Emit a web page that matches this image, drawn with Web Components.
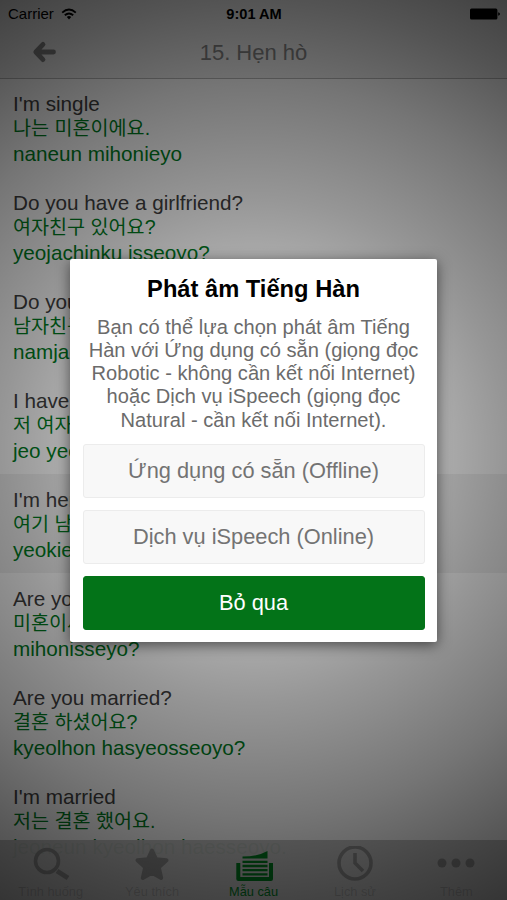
<!DOCTYPE html>
<html lang="vi">
<head>
<meta charset="utf-8">
<title>Hẹn hò</title>
<style>
  body {
    margin: 0;
    font-family: "Liberation Sans", "Noto Sans CJK KR", sans-serif;
  }
</style>
</head>
<body>
<phrase-app></phrase-app>

<script>
class StatusBar extends HTMLElement {
    constructor() {
        super();
        this.attachShadow({ mode: 'open' });
    }

    connectedCallback() {
        this.shadowRoot.innerHTML = `
      <style>
        :host {
          display: flex;
          align-items: center;
          height: 26px;
          padding: 1px 7px 0 8px;
          box-sizing: border-box;
          color: #000;
        }
        .side { flex: 1; display: flex; align-items: center; gap: 7px; font-size: 15px; }
        .right { justify-content: flex-end; }
        .time { font-size: 14.6px; font-weight: bold; }
        svg { display: block; }
      </style>
      <div class="side">
        <span>Carrier</span>
        <svg width="16" height="12" viewBox="0 0 16 12" fill="none" stroke="#000" stroke-width="1.9">
          <path d="M1.2 4.6Q8 -1.4 14.8 4.6"/>
          <path d="M3.8 7.2Q8 3.6 12.2 7.2"/>
          <path d="M8 11.4L5.8 8.9Q8 7.2 10.2 8.9Z" fill="#000" stroke="none"/>
        </svg>
      </div>
      <span class="time">9:01 AM</span>
      <div class="side right">
        <svg width="30" height="12" viewBox="0 0 30 12">
          <rect x="0" y="0.5" width="27.4" height="11" rx="1.5"/>
          <path d="M28.2 4.3Q30 4.8 30 6T28.2 7.7Z"/>
        </svg>
      </div>
    `;
    }
}

class NavBar extends HTMLElement {
    constructor() {
        super();
        this.attachShadow({ mode: 'open' });
    }

    connectedCallback() {
        this.shadowRoot.innerHTML = `
      <style>
        :host {
          display: grid;
          grid-template-columns: 90px 1fr 90px;
          align-items: center;
          height: 53px;
          box-sizing: border-box;
          padding-top: 1px;
          border-bottom: 1px solid #b8b8b8;
          color: #858585;
          font-size: 22px;
          text-align: center;
        }
        svg { display: block; margin: 0 0 2px 32px; }
      </style>
      <svg width="24" height="22" viewBox="0 0 24 22" fill="none" stroke="#858585" stroke-width="4.8" stroke-linecap="round" stroke-linejoin="round">
        <path d="M11 3.4L3.8 11L11 18.6M5 11H21.5"/>
      </svg>
      <slot></slot>
    `;
    }
}

class PhraseRow extends HTMLElement {
    constructor() {
        super();
        this.attachShadow({ mode: 'open' });
    }

    connectedCallback() {
        this.shadowRoot.innerHTML = `
      <style>
        :host {
          display: block;
          height: 99px;
          padding: 13px 13px 0;
          box-sizing: border-box;
          white-space: nowrap;
          font-size: 20.7px;
          color: #404040;
        }
        :host([active]) { background: #f1f1f1; }
        div { height: 26px; line-height: 26px; }
        .ko { height: 24px; line-height: 23px; font-size: 19.6px; }
        .ko, .latin { color: #007d1f; }
      </style>
      <div><slot name="en"></slot></div>
      <div class="ko"><slot name="ko"></slot></div>
      <div class="latin"><slot name="latin"></slot></div>
    `;
    }
}

const TAB_ICONS = {
    search: '<circle cx="16" cy="15" r="11.5" fill="none" stroke-width="3.6"/><path d="M26 25L37 32" fill="none" stroke-width="5"/>',
    star: '<path d="M20 4.5L24 13.2L34.5 14.2L26.8 21.4L29.2 32L20 26.8L10.8 32L13.2 21.4L5.5 14.2L16 13.2Z" stroke-width="4" stroke-linejoin="round"/>',
    phrases: '<path d="M4.3 17V33H37V17" fill="none" stroke-width="4" stroke-linejoin="round"/><path d="M8.5 12.4V10.6Q24 10.5 33.5 5V12.4Z" stroke="none"/><path d="M8.5 15.8H33.5M8.5 20H33.5M8.5 24.2H33.5M8.5 28.3H33.5" fill="none" stroke-width="2.3"/>',
    clock: '<circle cx="20" cy="17" r="16" fill="none" stroke-width="3.6"/><path d="M20 7V17L28 25" fill="none" stroke-width="3.6"/>',
    more: '<circle cx="6" cy="17" r="4.5" stroke="none"/><circle cx="20" cy="17" r="4.5" stroke="none"/><circle cx="34" cy="17" r="4.5" stroke="none"/>',
};

class TabItem extends HTMLElement {
    constructor() {
        super();
        this.attachShadow({ mode: 'open' });
    }

    connectedCallback() {
        this.shadowRoot.innerHTML = `
      <style>
        :host {
          display: flex;
          flex-direction: column;
          align-items: center;
          flex: 1;
          padding-top: 6px;
          font-size: 12.8px;
          line-height: 15px;
          color: rgba(0, 0, 0, .17);
          --icon: #8f8f8f;
        }
        :host([selected]) { color: #007d1f; --icon: #007d1f; }
        svg { display: block; fill: var(--icon); stroke: var(--icon); }
      </style>
      <svg width="40" height="38" viewBox="0 0 40 38">${TAB_ICONS[this.getAttribute('icon')]}</svg>
      <slot></slot>
    `;
    }
}

class TabBar extends HTMLElement {
    constructor() {
        super();
        this.attachShadow({ mode: 'open' });
    }

    connectedCallback() {
        this.shadowRoot.innerHTML = `
      <style>
        :host {
          position: absolute;
          left: 0;
          right: 0;
          bottom: 0;
          display: flex;
          height: 60px;
          background: rgba(192, 192, 192, .95);
        }
      </style>
      <slot></slot>
    `;
    }
}

class ChoiceButton extends HTMLElement {
    constructor() {
        super();
        this.attachShadow({ mode: 'open' });
    }

    connectedCallback() {
        this.shadowRoot.innerHTML = `
      <style>
        :host { display: block; height: 54px; }
        button {
          display: block;
          width: 100%;
          height: 100%;
          padding: 1px 0 0;
          border: 1px solid #ececec;
          border-radius: 3px;
          background: #f8f8f8;
          color: #737373;
          font: inherit;
          font-size: 21.8px;
        }
        :host([primary]) button {
          background: #037318;
          border-color: #037318;
          color: #fff;
        }
      </style>
      <button><slot></slot></button>
    `;
    }
}

class ChoiceDialog extends HTMLElement {
    constructor() {
        super();
        this.attachShadow({ mode: 'open' });
    }

    connectedCallback() {
        this.shadowRoot.innerHTML = `
      <style>
        :host {
          position: absolute;
          inset: 0;
          display: grid;
          justify-content: center;
          align-content: center;
          background: radial-gradient(circle 516px at 50% 50%,
            rgba(0,0,0,.1), rgba(0,0,0,.31) 34%, rgba(0,0,0,.41) 49%,
            rgba(0,0,0,.54) 71%, rgba(0,0,0,.65) 87%, rgba(0,0,0,.73));
        }
        .card {
          width: 367px;
          height: 383px;
          box-sizing: border-box;
          padding: 16px 12.5px 0;
          border-radius: 2px;
          background: #fff;
          box-shadow: 0 3px 14px rgba(0, 0, 0, .55);
          text-align: center;
        }
        h2 { margin: 0; font-size: 23.7px; line-height: 28px; color: #000; }
        .message {
          margin: 13px 0 0;
          height: 128px;
          font-size: 20.1px;
          line-height: 23.3px;
          color: #6b6b6b;
          white-space: nowrap;
        }
        .actions { display: flex; flex-direction: column; gap: 12px; }
      </style>
      <div class="card">
        <h2><slot name="title"></slot></h2>
        <div class="message"><slot name="message"></slot></div>
        <div class="actions"><slot></slot></div>
      </div>
    `;
    }
}

class PhraseApp extends HTMLElement {
    constructor() {
        super();
        this.attachShadow({ mode: 'open' });
    }

    connectedCallback() {
        const phrases = [
            ["I'm single", '나는 미혼이에요.', 'naneun mihonieyo'],
            ['Do you have a girlfriend?', '여자친구 있어요?', 'yeojachinku isseoyo?'],
            ['Do you have a boyfriend?', '남자친구 있어요?', 'namjachinku isseoyo?'],
            ['I have a girlfriend', '저 여자친구 있어요.', 'jeo yeojachinku isseoyo.'],
            ["I'm here with my boyfriend", '여기 남자친구랑 왔어요.', 'yeokie namjachinkurang wasseoyo.'],
            ['Are you single?', '미혼이세요?', 'mihonisseyo?'],
            ['Are you married?', '결혼 하셨어요?', 'kyeolhon hasyeosseoyo?'],
            ["I'm married", '저는 결혼 했어요.', 'jeoneun kyeolhon haesseoyo.'],
        ];
        const rows = phrases.map(([en, ko, latin], i) => `
      <phrase-row ${i === 4 ? 'active' : ''}>
        <span slot="en">${en}</span><span slot="ko">${ko}</span><span slot="latin">${latin}</span>
      </phrase-row>`).join('');

        this.shadowRoot.innerHTML = `
      <style>
        :host {
          display: flex;
          flex-direction: column;
          position: relative;
          width: 507px;
          height: 900px;
          overflow: hidden;
          background: #fff;
        }
        header { background: #f0f0f0; }
        main { flex: 1; min-height: 0; overflow: hidden; margin-top: -1px; }
      </style>
      <header>
        <status-bar></status-bar>
        <nav-bar>15. Hẹn hò</nav-bar>
      </header>
      <main>${rows}</main>
      <tab-bar>
        <tab-item icon="search">Tình huống</tab-item>
        <tab-item icon="star">Yêu thích</tab-item>
        <tab-item icon="phrases" selected>Mẫu câu</tab-item>
        <tab-item icon="clock">Lịch sử</tab-item>
        <tab-item icon="more">Thêm</tab-item>
      </tab-bar>
      <choice-dialog>
        <span slot="title">Phát âm Tiếng Hàn</span>
        <span slot="message">Bạn có thể lựa chọn phát âm Tiếng<br>Hàn với Ứng dụng có sẵn (giọng đọc<br>Robotic - không cần kết nối Internet)<br>hoặc Dịch vụ iSpeech (giọng đọc<br>Natural - cần kết nối Internet).</span>
        <choice-button>Ứng dụng có sẵn (Offline)</choice-button>
        <choice-button>Dịch vụ iSpeech (Online)</choice-button>
        <choice-button primary>Bỏ qua</choice-button>
      </choice-dialog>
    `;
    }
}

customElements.define('status-bar', StatusBar);
customElements.define('nav-bar', NavBar);
customElements.define('phrase-row', PhraseRow);
customElements.define('tab-item', TabItem);
customElements.define('tab-bar', TabBar);
customElements.define('choice-button', ChoiceButton);
customElements.define('choice-dialog', ChoiceDialog);
customElements.define('phrase-app', PhraseApp);
</script>
</body>
</html>
